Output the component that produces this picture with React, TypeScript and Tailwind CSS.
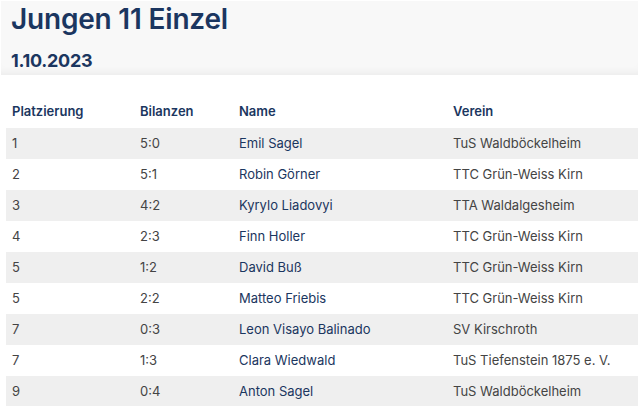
const ROWS: [string, string, string, string][] = [
  ['1', '5:0', 'Emil Sagel', 'TuS Waldböckelheim'],
  ['2', '5:1', 'Robin Görner', 'TTC Grün-Weiss Kirn'],
  ['3', '4:2', 'Kyrylo Liadovyi', 'TTA Waldalgesheim'],
  ['4', '2:3', 'Finn Holler', 'TTC Grün-Weiss Kirn'],
  ['5', '1:2', 'David Buß', 'TTC Grün-Weiss Kirn'],
  ['5', '2:2', 'Matteo Friebis', 'TTC Grün-Weiss Kirn'],
  ['7', '0:3', 'Leon Visayo Balinado', 'SV Kirschroth'],
  ['7', '1:3', 'Clara Wiedwald', 'TuS Tiefenstein 1875 e. V.'],
  ['9', '0:4', 'Anton Sagel', 'TuS Waldböckelheim'],
]

export default function App() {
  return (
    <div className="w-[640px] h-[406px] overflow-hidden bg-white font-['Inter',sans-serif]">
      {/* page header */}
      <div className="mt-px ml-px mr-[2px] h-[74px] bg-[#f8f8f8] pl-[10px] shadow-[inset_0_-8px_8px_-6px_rgba(0,0,0,0.06)]">
        <h1 className="pt-[1px] text-[28px] leading-[34px] font-semibold tracking-[-0.2px] text-[#1b3660]">Jungen 11 Einzel</h1>
        <div className="mt-[13px] text-[18px] leading-[24px] font-bold tracking-[-0.3px] text-[#1b3660]">1.10.2023</div>
      </div>

      <div className="ml-[6px] mr-[2px] mt-[24px]">
        <div className="grid grid-cols-[128px_99px_214px_1fr] h-[29px] pt-[3px] items-start text-[13px] font-semibold text-[#1b3660]">
          <div className="pl-[6px]">Platzierung</div>
          <div className="pl-[6px]">Bilanzen</div>
          <div className="pl-[6px]">Name</div>
          <div className="pl-[6px]">Verein</div>
        </div>
        {ROWS.map((r, i) => (
          <div key={i} className={`grid grid-cols-[128px_99px_214px_1fr] h-[31px] items-center text-[13px] ${i % 2 === 0 ? 'bg-[#efefef]' : 'bg-white'}`}>
            <div className="pl-[6px] text-[#444]">{r[0]}</div>
            <div className="pl-[6px] text-[#444]">{r[1]}</div>
            <div className="pl-[6px] text-[#1b3660]">{r[2]}</div>
            <div className="pl-[6px] text-[#444]">{r[3]}</div>
          </div>
        ))}
      </div>
    </div>
  )
}
